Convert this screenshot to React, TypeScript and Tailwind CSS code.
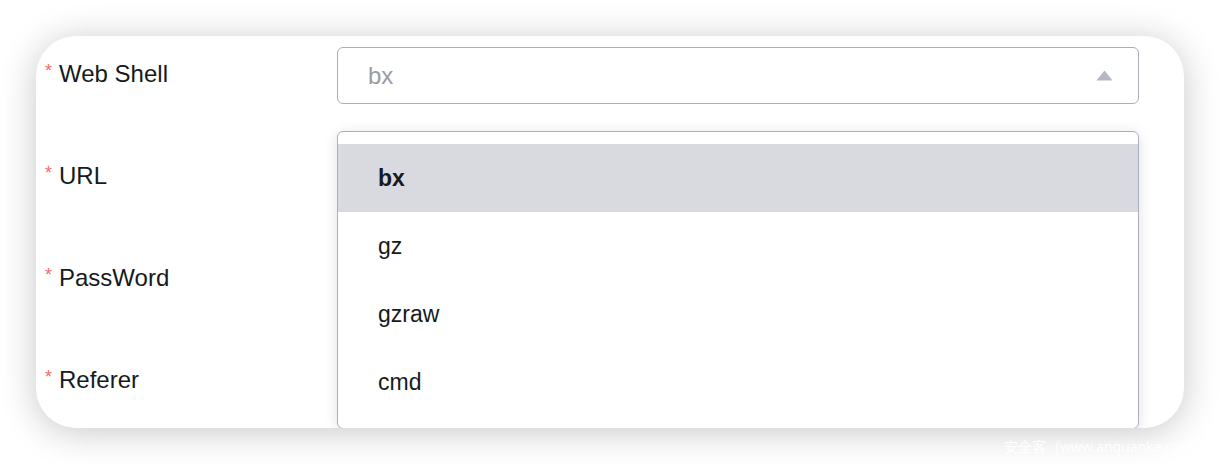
import React from "react";

const labels = ["Web Shell", "URL", "PassWord", "Referer"];
const options = ["bx", "gz", "gzraw", "cmd"];

export default function App() {
  return (
    <div
      className="relative h-[464px] w-[1220px] overflow-hidden bg-white pl-[36px] pt-[36px]"
      style={{ fontFamily: '"Liberation Sans", Arial, sans-serif' }}
    >
      <div className="relative flex h-[392px] w-[1148px] overflow-hidden rounded-[40px] bg-white pt-[11px] shadow-[0_4px_36px_rgba(0,0,0,0.22)]">
        <div className="flex w-[301px] shrink-0 flex-col pl-[9px]">
          {labels.map((l) => (
            <div key={l} className="mb-[45px] flex h-[57px] shrink-0 items-center pb-[4px] text-[24px] text-[#161a20]">
              <span className="mr-[7px] mt-[-5px] text-[18px] text-[#f56c6c]">*</span>
              <span>{l}</span>
            </div>
          ))}
        </div>
        <div className="relative flex w-[802px] shrink-0 flex-col">
          <div className="flex h-[57px] shrink-0 items-center justify-between rounded-[6px] border border-[#aaaebf] bg-white pl-[30px] pr-[25px]">
            <span className="text-[24px] text-[#9a9ca3]">bx</span>
            <svg width="17" height="11" viewBox="0 0 17 11">
              <polygon points="8.5,0.5 16.5,10.5 0.5,10.5" fill="#b4b8c2" />
            </svg>
          </div>
          {[1, 2, 3].map((i) => (
            <div key={i} className="mt-[45px] h-[57px] shrink-0 rounded-[6px] border border-[#aaaebf] bg-white" />
          ))}
          <div className="absolute left-0 top-[84px] w-[802px] rounded-[6px] border border-[#aaaebf] bg-white pb-[12px] pt-[12px] shadow-[0_2px_14px_rgba(0,0,0,0.12)]">
            {options.map((o, i) => (
              <div
                key={o}
                className={
                  "flex h-[68px] items-center pl-[40px] text-[23px] text-[#161a20] " +
                  (i === 0 ? "bg-[#d8dadf] font-bold" : "")
                }
              >
                {o}
              </div>
            ))}
          </div>
        </div>
      </div>
      <div
        className="absolute left-[1004px] top-[436px] whitespace-nowrap text-[14px] text-white/90"
        style={{ fontFamily: '"Open Sans", "Noto Sans CJK SC", sans-serif' }}
      >
        安全客（www.anquanke.com）
      </div>
    </div>
  );
}
